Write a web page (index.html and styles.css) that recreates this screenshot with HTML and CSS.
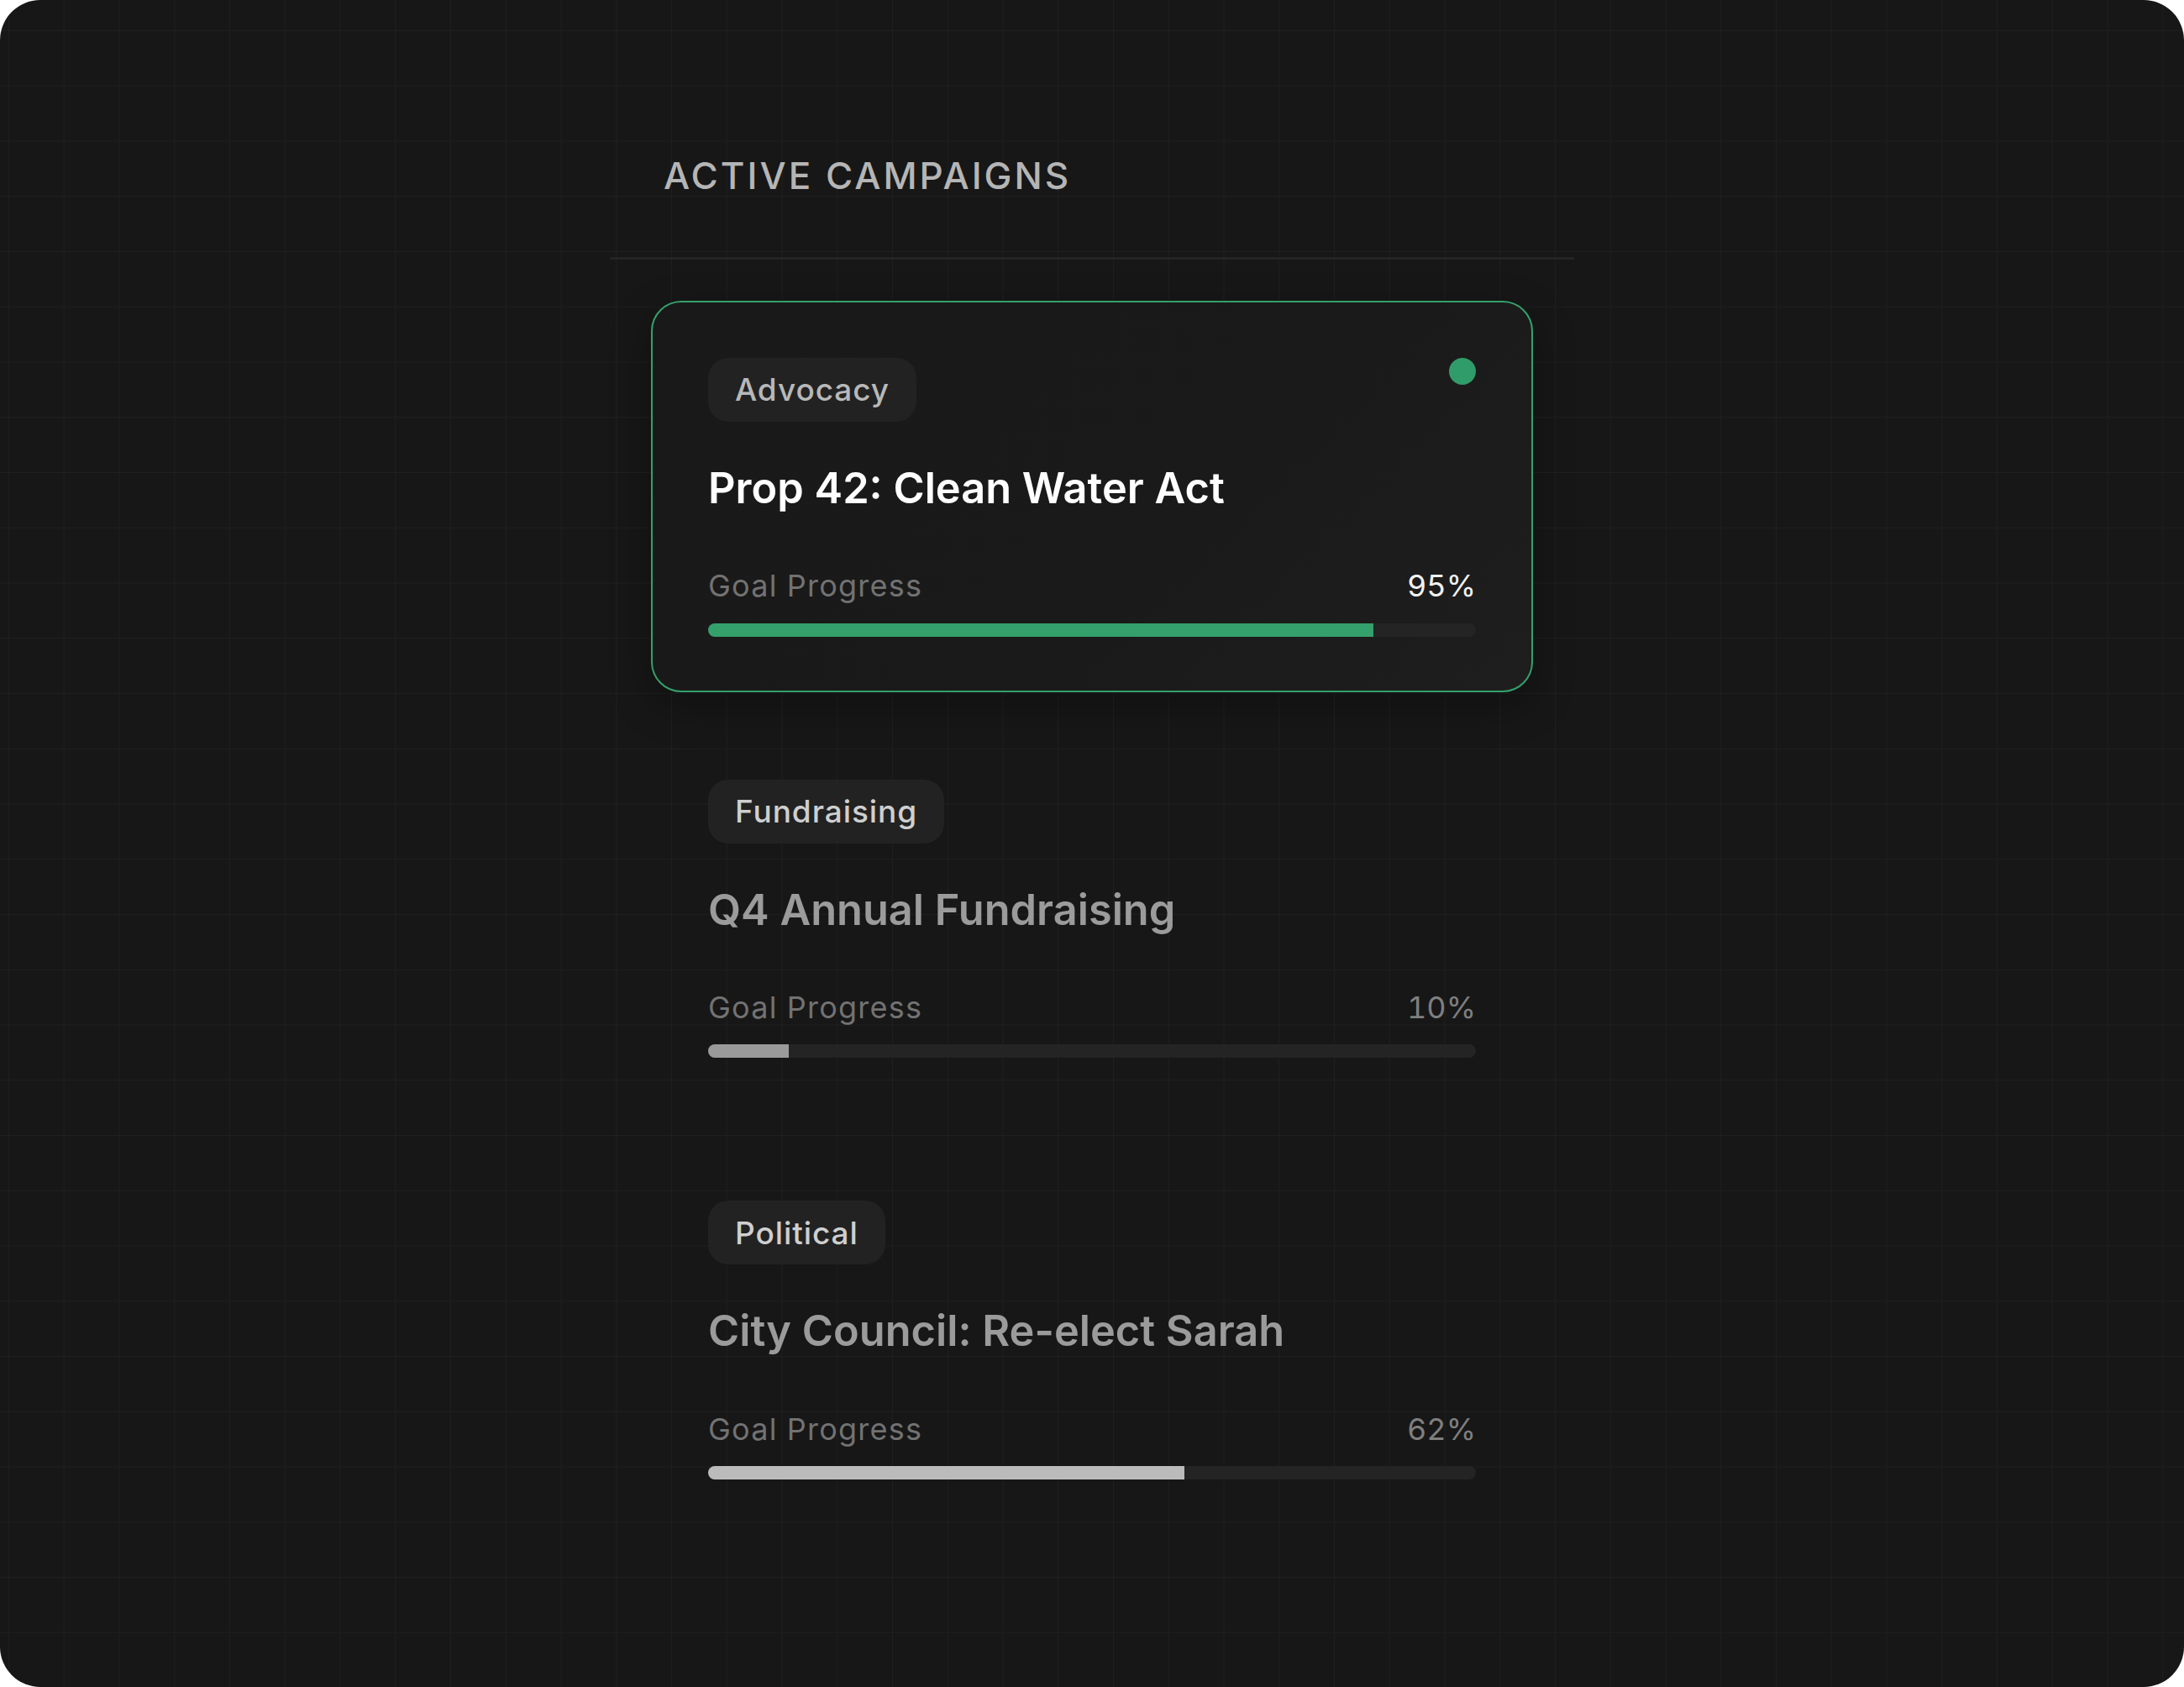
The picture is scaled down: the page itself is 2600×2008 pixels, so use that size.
FILE: index.html
```html
<!DOCTYPE html>
<html lang="en">
<head>
    <meta charset="UTF-8">
    <meta name="viewport" content="width=device-width, initial-scale=1.0">
    <title>Active Campaigns</title>
    <link rel="stylesheet" href="styles.css">
</head>
<body>
    <div class="frame">
        <div class="container">
            <h2 class="section-title">Active Campaigns</h2>

            <div class="campaign-list">
                <div class="campaign active">
                    <div class="campaign-top">
                        <span class="tag">Advocacy</span>
                        <span class="status-dot"></span>
                    </div>
                    <h3 class="campaign-name">Prop 42: Clean Water Act</h3>
                    <div class="progress-head">
                        <span class="progress-label">Goal Progress</span>
                        <span class="progress-value">95%</span>
                    </div>
                    <div class="bar"><div class="bar-fill" style="width: 86.6%"></div></div>
                </div>

                <div class="campaign">
                    <div class="campaign-top">
                        <span class="tag">Fundraising</span>
                    </div>
                    <h3 class="campaign-name">Q4 Annual Fundraising</h3>
                    <div class="progress-head">
                        <span class="progress-label">Goal Progress</span>
                        <span class="progress-value">10%</span>
                    </div>
                    <div class="bar"><div class="bar-fill low" style="width: 10.5%"></div></div>
                </div>

                <div class="campaign">
                    <div class="campaign-top">
                        <span class="tag">Political</span>
                    </div>
                    <h3 class="campaign-name">City Council: Re-elect Sarah</h3>
                    <div class="progress-head">
                        <span class="progress-label">Goal Progress</span>
                        <span class="progress-value">62%</span>
                    </div>
                    <div class="bar"><div class="bar-fill mid" style="width: 62%"></div></div>
                </div>
            </div>
        </div>
    </div>
</body>
</html>
```

FILE: styles.css
```css
/* Reset and base styles */
* {
    margin: 0;
    padding: 0;
    box-sizing: border-box;
}
body {
    font-family: Inter, "Noto Sans", sans-serif;
    background-color: #fff;
    color: #e5e5e5;
}

/* Dark panel with grid */
.frame {
    width: 2600px;
    height: 2008px;
    border-radius: 48px;
    overflow: hidden;
    background-color: #171717;
    background-image:
        linear-gradient(#1f1f1f 1px, transparent 1px),
        linear-gradient(90deg, #1f1f1f 1px, transparent 1px);
    background-size: 65.75px 65.75px;
    background-position: 10px 36px;
}
.container {
    width: 1148px;
    margin: 0 auto;
    padding-top: 183px;
}
.section-title {
    font-size: 44px;
    line-height: 1.2;
    font-weight: 500;
    letter-spacing: 0.068em;
    text-transform: uppercase;
    color: #b5b5b5;
    padding: 0 64px 70px;
    border-bottom: 3px solid #242424;
}

/* Campaign list */
.campaign-list {
    display: flex;
    flex-direction: column;
    gap: 36px;
    padding: 49px 49px 0;
}
.campaign {
    border: 2px solid transparent;
    border-radius: 36px;
    padding: 66px 66px 64px;
}
.campaign.active {
    border-color: #34a06c;
    background: linear-gradient(135deg, #191919 0%, #1a1a1a 60%, #1e1e1e 100%);
    box-shadow: 0 16px 50px rgba(0, 0, 0, 0.3);
}
.campaign-top {
    display: flex;
    justify-content: space-between;
    align-items: flex-start;
}
.tag {
    display: inline-flex;
    align-items: center;
    height: 76px;
    padding: 0 32px;
    border-radius: 24px;
    background-color: #222;
    font-size: 37px;
    font-weight: 500;
    letter-spacing: 0.025em;
    color: #cfcfcf;
}
.active .tag {
    color: #b8b8b8;
}
.status-dot {
    width: 32px;
    height: 32px;
    border-radius: 50%;
    background-color: #309c69;
}
.campaign-name {
    margin-top: 49px;
    font-size: 50.5px;
    line-height: 1.2;
    font-weight: 600;
    color: #9b9b9b;
}
.active .campaign-name {
    color: #fff;
}

/* Progress */
.progress-head {
    display: flex;
    justify-content: space-between;
    align-items: baseline;
    margin-top: 65px;
    font-size: 36px;
    line-height: 1.2;
    font-variant-numeric: tabular-nums;
}
.progress-label {
    color: #727272;
    letter-spacing: 0.035em;
}
.progress-value {
    color: #7f7f7f;
}
.active .progress-value {
    color: #f2f2f2;
}
.bar {
    height: 16px;
    margin-top: 22px;
    border-radius: 8px;
    background-color: #242424;
    overflow: hidden;
}
.bar-fill {
    height: 100%;
    background-color: #34a06c;
}
.bar-fill.low {
    background-color: #9a9a9a;
}
.bar-fill.mid {
    background-color: #bbb;
}
```
